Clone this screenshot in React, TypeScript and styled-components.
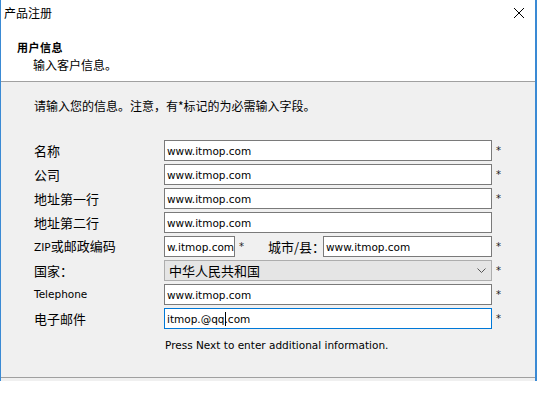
import React from 'react';
import styled, { createGlobalStyle } from 'styled-components';

const GlobalStyle = createGlobalStyle`
  body {
    margin: 0;
    background: #ffffff;
  }
`;

const cjk = `"Noto Sans CJK SC", "Noto Sans", sans-serif`;
const latin = `"DejaVu Sans", "Noto Sans CJK SC", sans-serif`;

interface Field {
  label: string;
  value: string;
  required: boolean;
}

const fields: Field[] = [
  { label: '名称', value: 'www.itmop.com', required: true },
  { label: '公司', value: 'www.itmop.com', required: true },
  { label: '地址第一行', value: 'www.itmop.com', required: true },
  { label: '地址第二行', value: 'www.itmop.com', required: false },
];

const App = () => {
  return (
    <>
      <GlobalStyle />
      <Window>
        <TitleBar>
          <span>产品注册</span>
          <CloseButton>
            <svg width="12" height="12" viewBox="0 0 12 12">
              <path d="M1 1 L11 11 M11 1 L1 11" stroke="#000" strokeWidth="1" />
            </svg>
          </CloseButton>
        </TitleBar>
        <Header>
          <HeaderTitle>用户信息</HeaderTitle>
          <HeaderSub>输入客户信息。</HeaderSub>
        </Header>
        <Body>
          <Intro>请输入您的信息。注意，有*标记的为必需输入字段。</Intro>
          <Form>
            {fields.map((f) => (
              <React.Fragment key={f.label}>
                <Label>{f.label}</Label>
                <TextBox>{f.value}</TextBox>
                <Star>{f.required ? '*' : ''}</Star>
              </React.Fragment>
            ))}

            <Label $small>
              ZIP<span>或邮政编码</span>
            </Label>
            <SplitRow>
              <TextBox $width={71}>w.itmop.com</TextBox>
              <Star>*</Star>
              <CityLabel>城市/县：</CityLabel>
              <TextBox $grow>www.itmop.com</TextBox>
            </SplitRow>
            <Star>*</Star>

            <Label>国家：</Label>
            <Select>
              <span>中华人民共和国</span>
              <svg width="9" height="6" viewBox="0 0 9 6">
                <path d="M0.5 0.5 L4.5 4.5 L8.5 0.5" stroke="#555" strokeWidth="1" fill="none" />
              </svg>
            </Select>
            <Star>*</Star>

            <Label $small>Telephone</Label>
            <TextBox>www.itmop.com</TextBox>
            <Star>*</Star>

            <Label>电子邮件</Label>
            <TextBox $focused>
              itmop.@qq<Caret />.com
            </TextBox>
            <Star>*</Star>
          </Form>
          <Note>Press Next to enter additional information.</Note>
        </Body>
        <Footer />
      </Window>
    </>
  );
};

const Window = styled.div`
  width: 534px;
  height: 381px;
  border-left: 1px solid #3a8ad4;
  border-right: 2px solid #3a8ad4;
  background: #f0f0f0;
  display: flex;
  flex-direction: column;
  overflow: hidden;
`;

const TitleBar = styled.div`
  height: 26px;
  background: #ffffff;
  display: flex;
  align-items: center;
  justify-content: space-between;
  padding: 0 10px 1px 3px;
  box-sizing: border-box;
  font-family: ${cjk};
  font-size: 12px;
  color: #000;
`;

const CloseButton = styled.div`
  display: flex;
  align-items: center;
  width: 12px;
  height: 12px;
`;

const Header = styled.div`
  height: 41px;
  background: #ffffff;
  border-bottom: 1px solid #a0a0a0;
  padding: 14px 0 0 16px;
  display: flex;
  flex-direction: column;
  gap: 3px;
  font-family: ${cjk};
  color: #000;
`;

const HeaderTitle = styled.div`
  font-size: 11px;
  font-weight: bold;
  line-height: 14px;
  letter-spacing: 0.5px;
`;

const HeaderSub = styled.div`
  font-size: 12px;
  line-height: 16px;
  padding-left: 16px;
`;

const Body = styled.div`
  flex: 1;
  padding: 16px 0 0 33px;
  font-family: ${cjk};
  color: #000;
`;

const Intro = styled.div`
  font-size: 12px;
  line-height: 16px;
  margin-bottom: 26px;
`;

const Form = styled.div`
  display: grid;
  grid-template-columns: 130px 328px 20px;
  grid-auto-rows: 21px;
  row-gap: 3px;
  align-items: center;
`;

const Label = styled.div<{ $small?: boolean }>`
  font-family: ${(p) => (p.$small ? latin : cjk)};
  font-size: ${(p) => (p.$small ? '10.5px' : '13px')};
  line-height: 21px;
  span {
    font-family: ${cjk};
    font-size: 13px;
  }
`;

const TextBox = styled.div<{ $width?: number; $grow?: boolean; $focused?: boolean }>`
  box-sizing: border-box;
  height: 21px;
  width: ${(p) => (p.$width ? `${p.$width}px` : p.$grow ? 'auto' : '100%')};
  flex: ${(p) => (p.$grow ? 1 : 'none')};
  background: #ffffff;
  border: 1px solid ${(p) => (p.$focused ? '#0078d7' : '#7a7a7a')};
  padding: 0 2px;
  display: flex;
  align-items: center;
  font-family: ${latin};
  font-size: 10.5px;
  color: #000;
  white-space: nowrap;
  overflow: hidden;
`;

const Caret = styled.span`
  display: inline-block;
  width: 1px;
  height: 14px;
  background: #000;
  margin: 0 -1px 0 0;
`;

const Star = styled.div`
  padding-left: 4px;
  font-family: ${latin};
  font-size: 10px;
  color: #222;
  line-height: 21px;
`;

const SplitRow = styled.div`
  display: flex;
  align-items: center;
  height: 21px;
  ${Star} {
    width: 29px;
  }
`;

const CityLabel = styled.div`
  font-family: ${cjk};
  font-size: 13px;
  width: 55px;
  white-space: nowrap;
`;

const Select = styled.div`
  box-sizing: border-box;
  height: 21px;
  background: #e5e5e5;
  border: 1px solid #adadad;
  padding: 0 5px 0 4px;
  display: flex;
  align-items: center;
  justify-content: space-between;
  font-family: ${cjk};
  font-size: 13px;
  color: #000;
`;

const Note = styled.div`
  margin: 9px 0 0 131px;
  font-family: ${latin};
  font-size: 10.5px;
  line-height: 14px;
  color: #000;
`;

const Footer = styled.div`
  height: 3px;
  border-top: 1px solid #a0a0a0;
`;

export default App;
